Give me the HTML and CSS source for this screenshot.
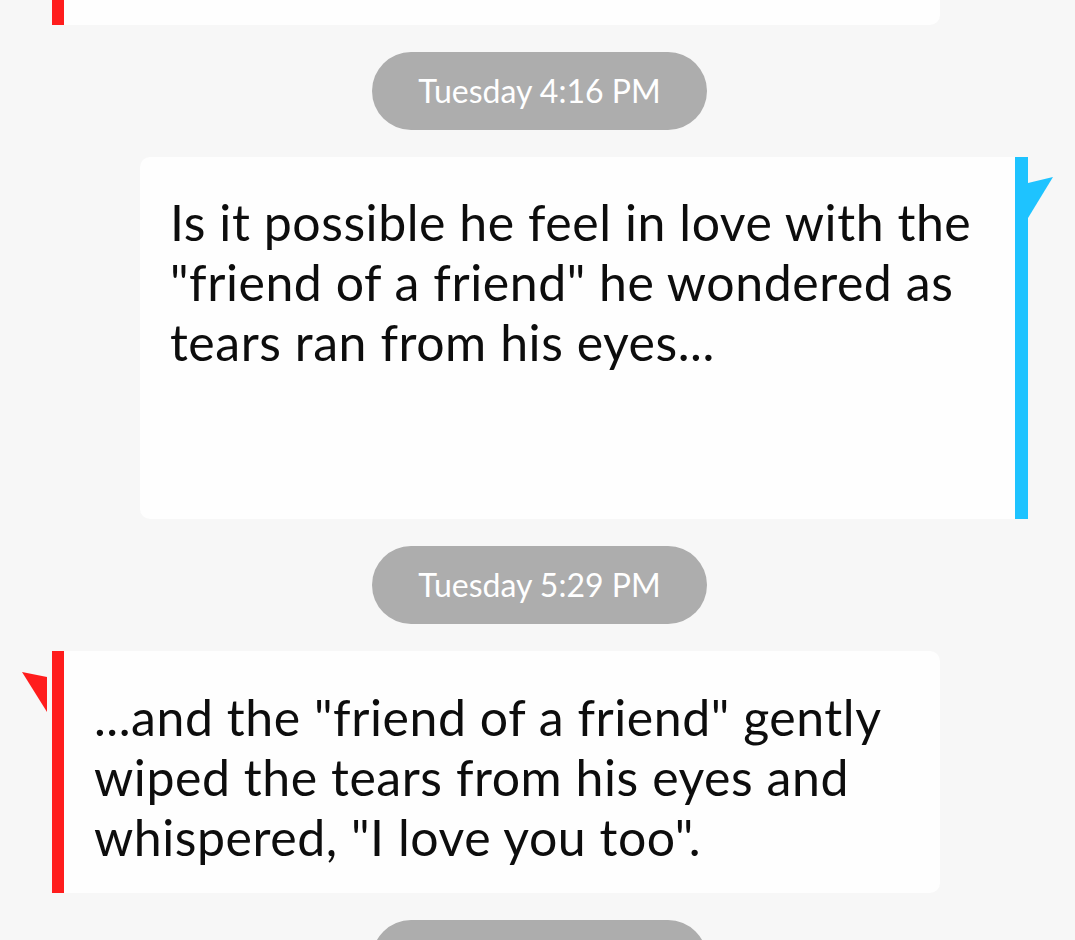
FILE: index.html
```html
<!DOCTYPE html>
<html>
<head>
<meta charset="utf-8">
<link rel="stylesheet" href="styles.css">
</head>
<body>
<div class="thread">
  <div class="bubble in clipped"></div>

  <div class="stamp">Tuesday 4:16 PM</div>

  <div class="bubble out">
    <svg class="tail tail-out" width="30" height="50" viewBox="0 0 30 50"><polygon points="0,6 25,0 0,41" fill="#1ec3ff"/></svg>
    <p>Is it possible he feel in love with the "friend of a friend" he wondered as tears ran from his eyes...</p>
  </div>

  <div class="stamp">Tuesday 5:29 PM</div>

  <div class="bubble in">
    <svg class="tail tail-in" width="30" height="50" viewBox="0 0 30 50"><polygon points="25,5 0,0 25,40" fill="#ff1d1d"/></svg>
    <p>...and the "friend of a friend" gently wiped the tears from his eyes and whispered, "I love you too".</p>
  </div>

  <div class="stamp"></div>
</div>
</body>
</html>
```

FILE: styles.css
```css
html, body {
  margin: 0;
  padding: 0;
}
body {
  background: #f7f7f7;
  height: 940px;
  overflow: hidden;
  font-family: "Lato", "Noto Sans", sans-serif;
  color: #0d0d0d;
}
.thread {
  display: flex;
  flex-direction: column;
  gap: 27px;
}
.bubble {
  position: relative;
  background: #fefefe;
  box-sizing: border-box;
}
.bubble p {
  margin: 0;
  font-size: 50px;
  line-height: 60px;
  letter-spacing: 0.55px;
}
.bubble.in {
  align-self: flex-start;
  margin-left: 52px;
  width: 888px;
  border-left: 12px solid #ff1d1d;
  border-radius: 0 10px 10px 0;
  padding: 36px 20px 26px 30px;
}
.bubble.in.clipped {
  height: 25px;
  padding: 0;
  border-top-right-radius: 0;
}
.bubble.out {
  align-self: flex-end;
  margin-right: 47px;
  width: 888px;
  border-right: 13px solid #1ec3ff;
  border-radius: 10px 0 0 10px;
  padding: 35px 20px 147px 30px;
}
.tail {
  position: absolute;
  display: block;
}
.tail-out {
  left: 100%;
  margin-left: 13px;
  top: 20px;
}
.tail-in {
  right: 100%;
  margin-right: 12px;
  top: 21px;
}
.stamp {
  align-self: center;
  margin-left: 4px;
  width: 335px;
  height: 78px;
  box-sizing: border-box;
  border-radius: 39px;
  background: #adadad;
  color: #ffffff;
  font-size: 32px;
  line-height: 78px;
  text-align: center;
}
```
